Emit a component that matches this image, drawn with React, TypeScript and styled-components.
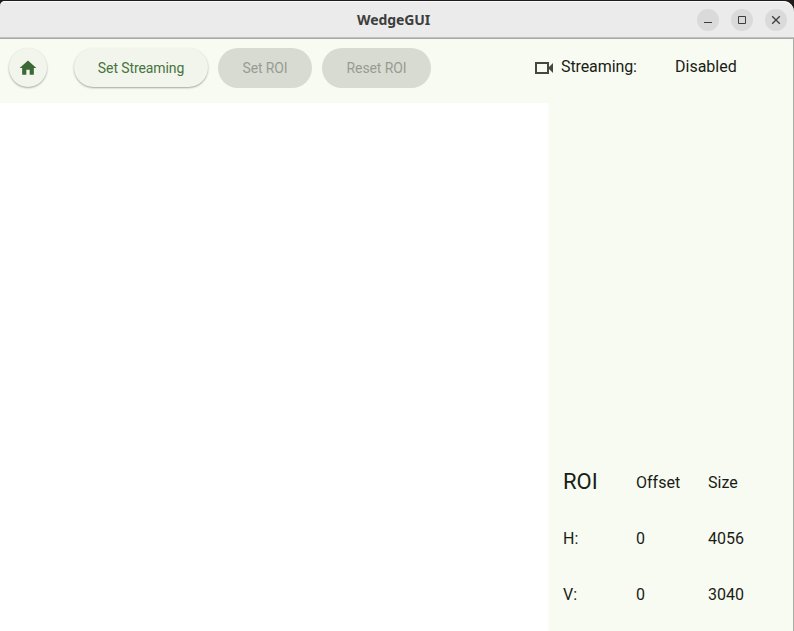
import React from "react";
import styled, { createGlobalStyle } from "styled-components";

const GlobalStyle = createGlobalStyle`
  *, *::before, *::after { box-sizing: border-box; }
  html, body { margin: 0; padding: 0; overflow: hidden; background: #201b1b; }
`;

const Window = styled.div`
  width: 794px;
  height: 631px;
  padding-top: 1px;
  display: flex;
  flex-direction: column;
  overflow: hidden;
  background: #201b1b;
  font-family: Roboto, sans-serif;
  color: #191d17;
`;

const TitleBar = styled.header`
  flex: none;
  height: 38px;
  display: grid;
  grid-template-columns: 1fr auto 1fr;
  align-items: center;
  padding: 0 7px 1px 0;
  background: #ebebeb;
  border-radius: 5px 11px 0 0;
  box-shadow: inset 0 1px #fafafa, inset 0 -1px #a9a9a7, inset 0 -2px #c1c1c1;
`;

const Title = styled.h1`
  grid-column: 2;
  margin: 0;
  width: 73px;
  font: 700 14px/20px "Noto Sans", sans-serif;
  letter-spacing: -0.1px;
  color: #3d3d3d;
  white-space: nowrap;
`;

const WindowControls = styled.div`
  display: flex;
  justify-content: flex-end;
  gap: 12px;
`;

const ControlButton = styled.button`
  width: 22px;
  height: 22px;
  padding: 0;
  display: grid;
  place-items: center;
  border: 0;
  border-radius: 50%;
  background: #dadada;
`;

const Content = styled.main`
  flex: 1;
  min-height: 0;
  display: flex;
  flex-direction: column;
  background: #f8fbf1;
  border-right: 1px solid #a9aba6;
`;

const Toolbar = styled.div`
  flex: none;
  height: 64px;
  display: flex;
  align-items: flex-start;
  padding: 9px 0 0 9px;
`;

const HomeButton = styled.button`
  width: 38px;
  height: 39px;
  padding: 1px 0 0;
  display: grid;
  place-items: center;
  border: 0;
  border-radius: 50%;
  background: #f2f5eb;
  color: #3b6935;
  box-shadow: 0 1px 2px rgba(0, 0, 0, 0.34);
`;

const Actions = styled.div`
  display: flex;
  gap: 10px;
  margin-left: 27px;
`;

const ActionButton = styled.button<{ $width: number }>`
  width: ${({ $width }) => $width}px;
  height: 39px;
  padding: 1px 0 0;
  border: 0;
  border-radius: 20px;
  background: #f2f5eb;
  color: #47733f;
  font: 400 14px/20px Roboto, sans-serif;
  letter-spacing: -0.1px;
  white-space: nowrap;
  box-shadow: 0 1px 2px rgba(0, 0, 0, 0.34);

  &:disabled {
    height: 40px;
    padding: 0;
    background: #d8dbd2;
    color: #979b92;
    box-shadow: none;
  }
`;

const StreamStatus = styled.div`
  display: flex;
  margin-left: 102px;
  font-size: 16px;
  line-height: 24px;
  padding-top: 7px;
`;

const CameraIcon = styled.svg`
  margin: 3px 8px 0 0;
`;

const StatusLabel = styled.span`
  width: 114px;
  letter-spacing: -0.1px;
`;

const Workspace = styled.div`
  flex: 1;
  min-height: 0;
  display: flex;
`;

const Preview = styled.section`
  width: 549px;
  background: #fff;
  border-right: 1px solid #fbfdf8;
`;

const SidePanel = styled.aside`
  flex: 1;
  display: flex;
  flex-direction: column;
  justify-content: flex-end;
  padding: 0 0 8px 14px;
`;

const RoiGrid = styled.div`
  display: grid;
  grid-template-columns: 73px 72px 1fr;
  grid-template-rows: repeat(3, 56px);
  align-items: center;
  font-size: 16px;
  line-height: 24px;
`;

const RoiHeading = styled.h2`
  margin: 0 0 2px;
  font-size: 22px;
  line-height: 28px;
  font-weight: 400;
`;

export default function App() {
  return (
    <>
      <GlobalStyle />
      <Window>
        <TitleBar>
          <Title>WedgeGUI</Title>
          <WindowControls>
            <ControlButton aria-label="Minimize">
              <svg width="22" height="22"><path d="M7 13.5h8" stroke="#3d3d3d" /></svg>
            </ControlButton>
            <ControlButton aria-label="Maximize">
              <svg width="22" height="22"><path d="M7.5 7.5h7v7h-7z" fill="none" stroke="#3d3d3d" /></svg>
            </ControlButton>
            <ControlButton aria-label="Close">
              <svg width="22" height="22"><path d="M7.2 7.2l7.6 7.6M14.8 7.2l-7.6 7.6" stroke="#3d3d3d" strokeWidth="1.3" /></svg>
            </ControlButton>
          </WindowControls>
        </TitleBar>
        <Content>
          <Toolbar>
            <HomeButton aria-label="Home">
              <svg width="20" height="20" viewBox="0 0 24 24">
                <path d="M10 20v-6h4v6h5v-8h3L12 3 2 12h3v8z" fill="currentColor" />
              </svg>
            </HomeButton>
            <Actions>
              <ActionButton $width={134}>Set Streaming</ActionButton>
              <ActionButton $width={94} disabled>Set ROI</ActionButton>
              <ActionButton $width={109} disabled>Reset ROI</ActionButton>
            </Actions>
            <StreamStatus>
              <CameraIcon width="20" height="20" viewBox="0 0 20 20">
                <path d="M3 5h12v10H3z" fill="none" stroke="#42493f" strokeWidth="2" />
                <path d="M15 10L20 5v10z" fill="#42493f" />
              </CameraIcon>
              <StatusLabel>Streaming:</StatusLabel>
              <span>Disabled</span>
            </StreamStatus>
          </Toolbar>
          <Workspace>
            <Preview />
            <SidePanel>
              <RoiGrid>
                <RoiHeading>ROI</RoiHeading>
                <span>Offset</span>
                <span>Size</span>
                <span>H:</span>
                <span>0</span>
                <span>4056</span>
                <span>V:</span>
                <span>0</span>
                <span>3040</span>
              </RoiGrid>
            </SidePanel>
          </Workspace>
        </Content>
      </Window>
    </>
  );
}
